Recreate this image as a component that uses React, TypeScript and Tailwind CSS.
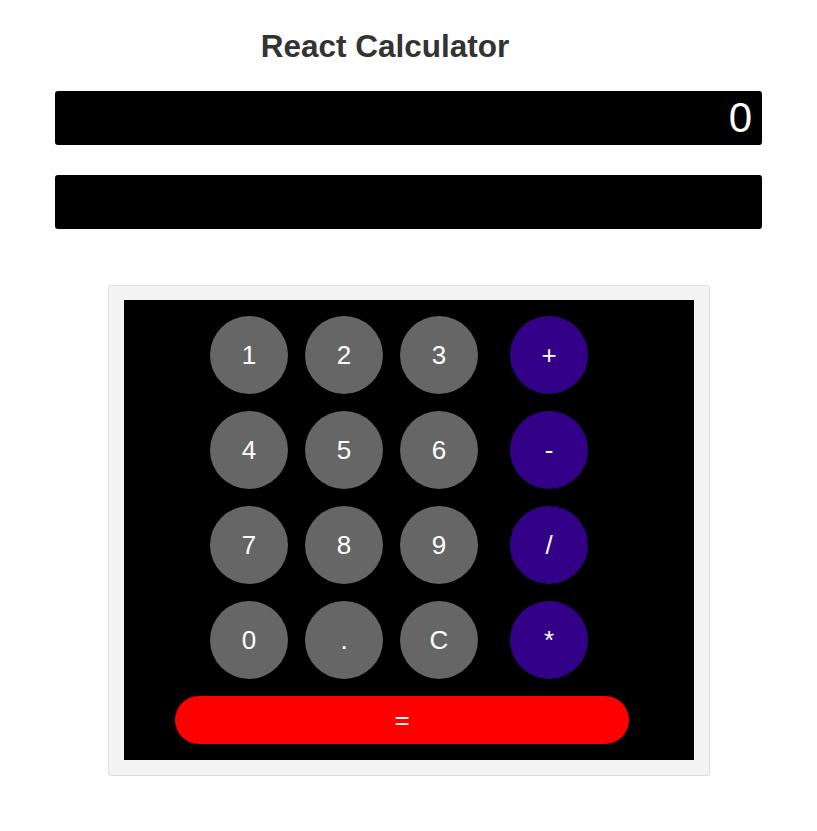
import React from "react";

const nums = [
  ["1", "2", "3"],
  ["4", "5", "6"],
  ["7", "8", "9"],
  ["0", ".", "C"],
];
const ops = ["+", "-", "/", "*"];

export default function App() {
  return (
    <div className="w-[817px] h-[831px] bg-white" style={{ fontFamily: '"Liberation Sans", Arial, sans-serif' }}>
      <div className="w-[770px] text-center pt-[28px] text-[31.5px] leading-[36px] font-bold text-[#333333]">
        React Calculator
      </div>
      <div className="px-[55px] pt-[27px]">
        <div className="h-[54px] bg-black rounded-[3px] flex items-center justify-end pr-[10px] text-white text-[42px] leading-none">
          0
        </div>
        <div className="h-[54px] bg-black rounded-[3px] mt-[30px]"></div>
      </div>
      <div className="ml-[108px] mt-[56px] w-[602px] h-[491px] bg-[#f4f4f4] border border-[#dddddd] rounded-[3px] p-[15px] pt-[14px]">
        <div className="w-[570px] h-[460px] bg-black pt-[16px] pl-[86px]">
          <div className="flex flex-col gap-[17px]">
            {nums.map((row, i) => (
              <div key={i} className="flex">
                <div className="flex gap-[17px]">
                  {row.map((n) => (
                    <div key={n} className="w-[78px] h-[78px] rounded-full bg-[#666666] text-white text-[26px] flex items-center justify-center">
                      {n}
                    </div>
                  ))}
                </div>
                <div className="ml-[32px] w-[78px] h-[78px] rounded-full bg-[#330088] text-white text-[26px] flex items-center justify-center">
                  {ops[i]}
                </div>
              </div>
            ))}
          </div>
          <div className="mt-[17px] -ml-[35px] w-[454px] h-[48px] rounded-full bg-[#ff0000] text-white text-[26px] flex items-center justify-center">
            =
          </div>
        </div>
      </div>
    </div>
  );
}
